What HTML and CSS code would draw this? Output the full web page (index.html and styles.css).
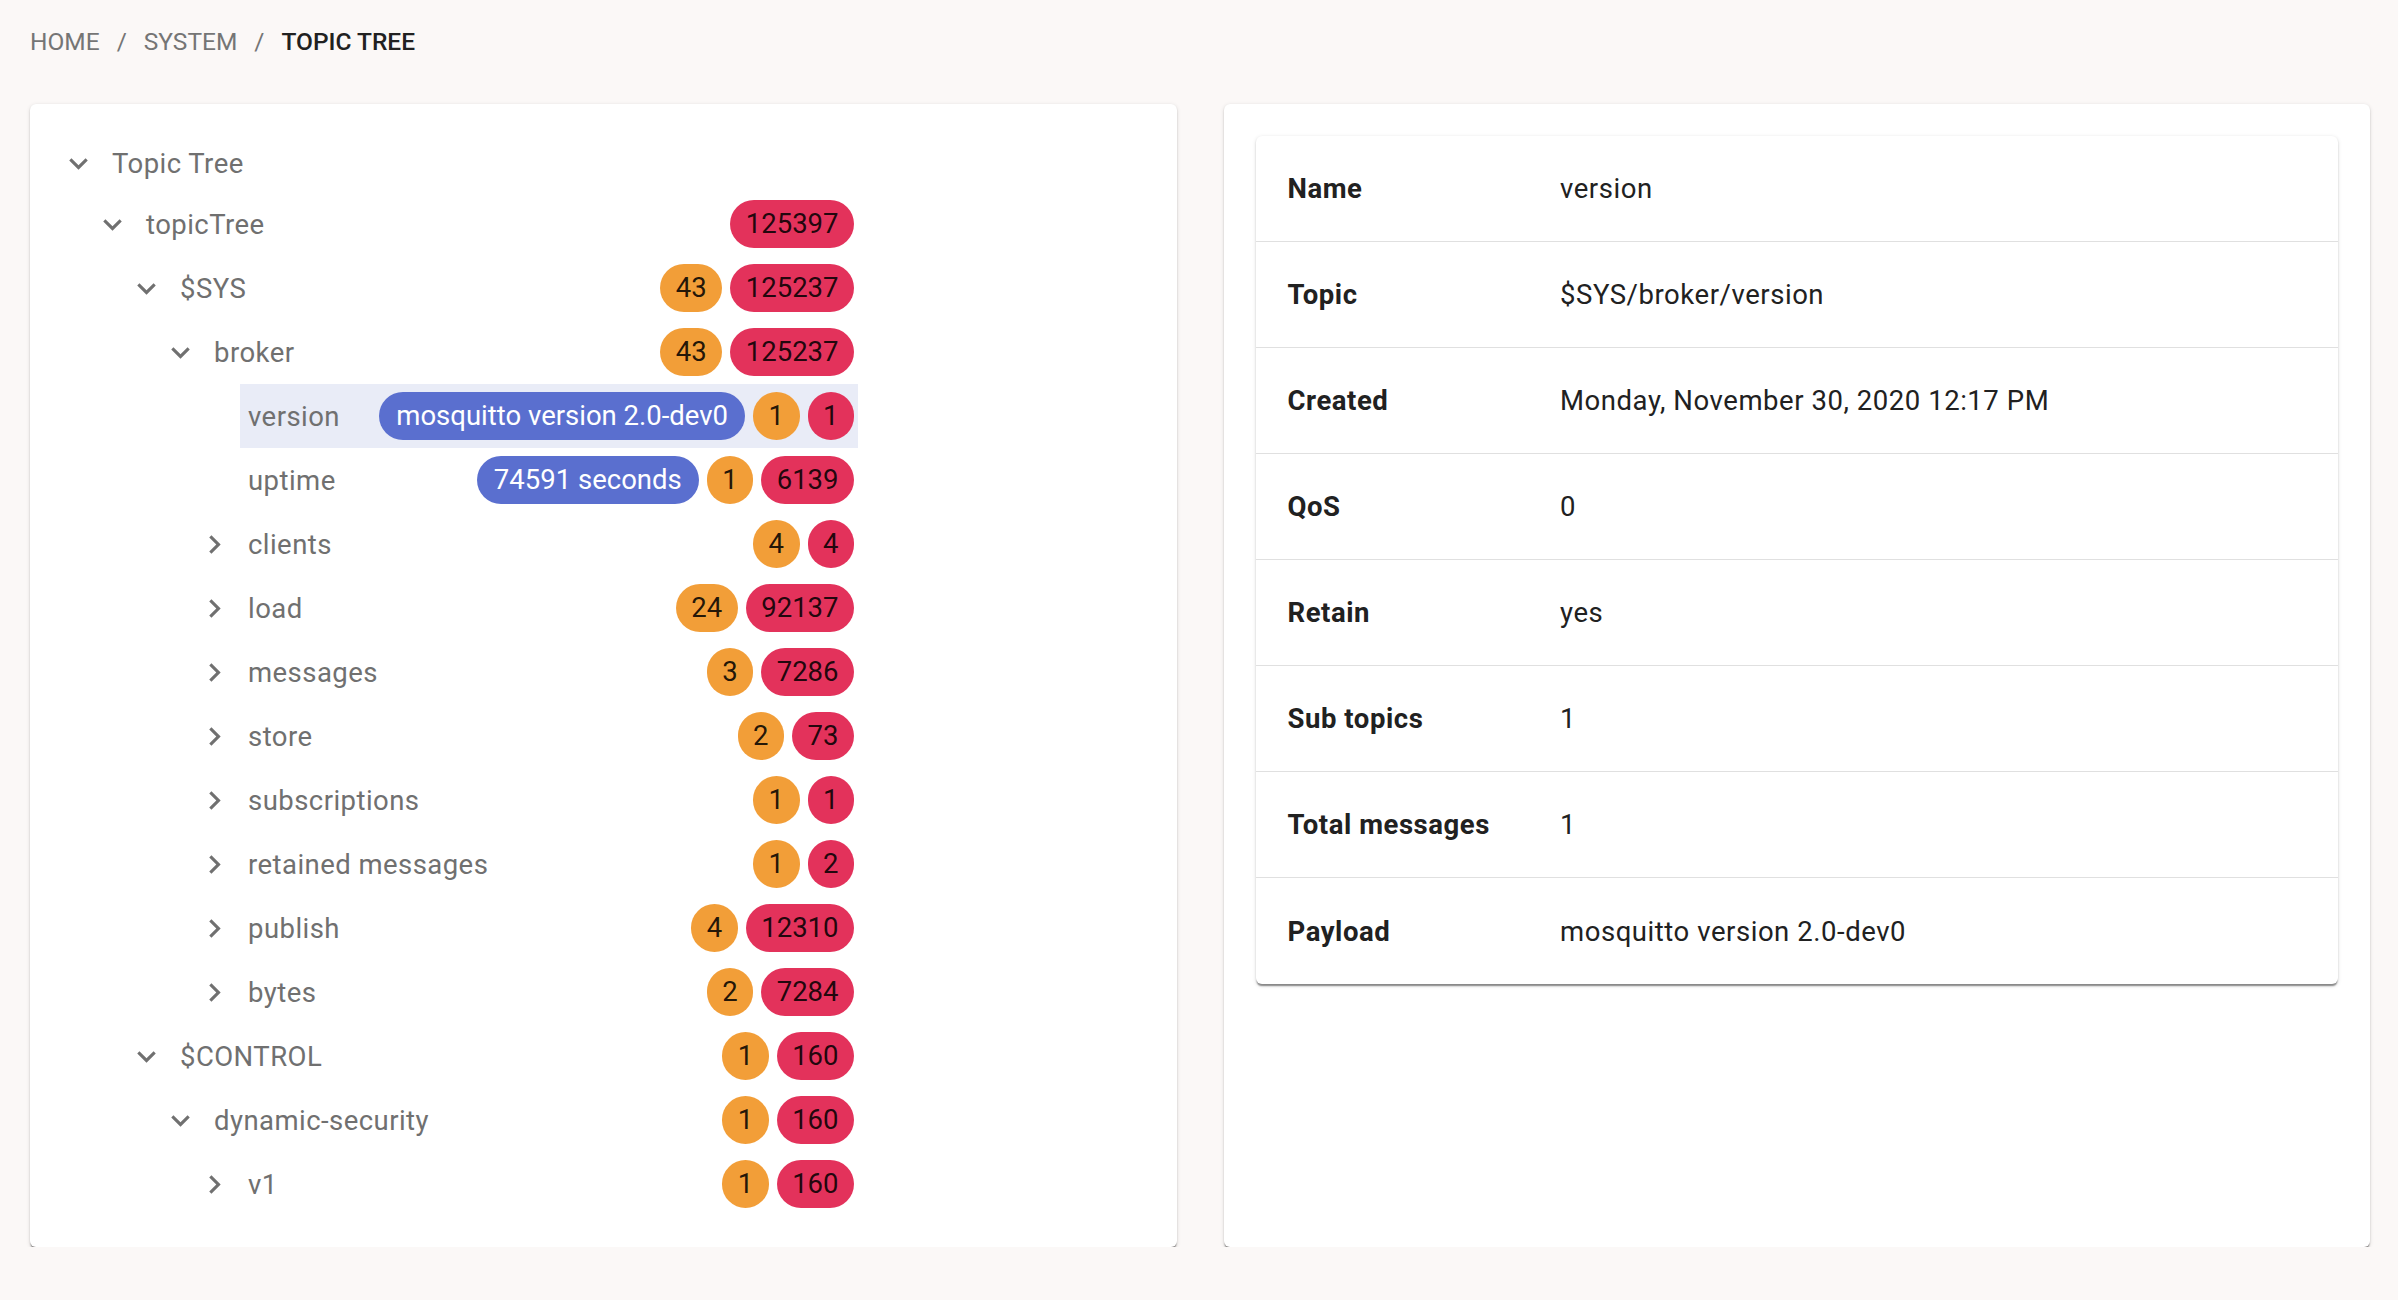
FILE: index.html
```html
<!DOCTYPE html>
<html lang="en">
<head>
<meta charset="utf-8">
<title>Topic Tree</title>
<link rel="stylesheet" href="styles.css">
</head>
<body>
<div class="page">
  <nav class="crumbs">
    <span class="crumb">Home</span><span class="sep">/</span><span class="crumb">System</span><span class="sep">/</span><span class="crumb current">Topic Tree</span>
  </nav>
  <div class="grid">
    <section class="card tree-card">
      <div class="tree">
        <div class="row l0 nochips">
          <span class="icon"><svg viewBox="0 0 24 24"><path d="M16.59 8.59L12 13.17 7.41 8.59 6 10l6 6 6-6z"/></svg></span>
          <div class="label"><span class="name">Topic Tree</span></div>
        </div>
        <div class="row l1">
          <span class="icon"><svg viewBox="0 0 24 24"><path d="M16.59 8.59L12 13.17 7.41 8.59 6 10l6 6 6-6z"/></svg></span>
          <div class="label"><span class="name">topicTree</span><span class="chips"><span class="chip red">125397</span></span></div>
        </div>
        <div class="row l2">
          <span class="icon"><svg viewBox="0 0 24 24"><path d="M16.59 8.59L12 13.17 7.41 8.59 6 10l6 6 6-6z"/></svg></span>
          <div class="label"><span class="name">$SYS</span><span class="chips"><span class="chip orange">43</span><span class="chip red">125237</span></span></div>
        </div>
        <div class="row l3">
          <span class="icon"><svg viewBox="0 0 24 24"><path d="M16.59 8.59L12 13.17 7.41 8.59 6 10l6 6 6-6z"/></svg></span>
          <div class="label"><span class="name">broker</span><span class="chips"><span class="chip orange">43</span><span class="chip red">125237</span></span></div>
        </div>
        <div class="row l4 selected">
          <span class="icon"></span>
          <div class="label"><span class="name">version</span><span class="chips"><span class="chip blue">mosquitto version 2.0-dev0</span><span class="chip orange">1</span><span class="chip red">1</span></span></div>
        </div>
        <div class="row l4">
          <span class="icon"></span>
          <div class="label"><span class="name">uptime</span><span class="chips"><span class="chip blue">74591 seconds</span><span class="chip orange">1</span><span class="chip red">6139</span></span></div>
        </div>
        <div class="row l4">
          <span class="icon"><svg viewBox="0 0 24 24"><path d="M10 6L8.59 7.41 13.17 12l-4.58 4.59L10 18l6-6z"/></svg></span>
          <div class="label"><span class="name">clients</span><span class="chips"><span class="chip orange">4</span><span class="chip red">4</span></span></div>
        </div>
        <div class="row l4">
          <span class="icon"><svg viewBox="0 0 24 24"><path d="M10 6L8.59 7.41 13.17 12l-4.58 4.59L10 18l6-6z"/></svg></span>
          <div class="label"><span class="name">load</span><span class="chips"><span class="chip orange">24</span><span class="chip red">92137</span></span></div>
        </div>
        <div class="row l4">
          <span class="icon"><svg viewBox="0 0 24 24"><path d="M10 6L8.59 7.41 13.17 12l-4.58 4.59L10 18l6-6z"/></svg></span>
          <div class="label"><span class="name">messages</span><span class="chips"><span class="chip orange">3</span><span class="chip red">7286</span></span></div>
        </div>
        <div class="row l4">
          <span class="icon"><svg viewBox="0 0 24 24"><path d="M10 6L8.59 7.41 13.17 12l-4.58 4.59L10 18l6-6z"/></svg></span>
          <div class="label"><span class="name">store</span><span class="chips"><span class="chip orange">2</span><span class="chip red">73</span></span></div>
        </div>
        <div class="row l4">
          <span class="icon"><svg viewBox="0 0 24 24"><path d="M10 6L8.59 7.41 13.17 12l-4.58 4.59L10 18l6-6z"/></svg></span>
          <div class="label"><span class="name">subscriptions</span><span class="chips"><span class="chip orange">1</span><span class="chip red">1</span></span></div>
        </div>
        <div class="row l4">
          <span class="icon"><svg viewBox="0 0 24 24"><path d="M10 6L8.59 7.41 13.17 12l-4.58 4.59L10 18l6-6z"/></svg></span>
          <div class="label"><span class="name">retained messages</span><span class="chips"><span class="chip orange">1</span><span class="chip red">2</span></span></div>
        </div>
        <div class="row l4">
          <span class="icon"><svg viewBox="0 0 24 24"><path d="M10 6L8.59 7.41 13.17 12l-4.58 4.59L10 18l6-6z"/></svg></span>
          <div class="label"><span class="name">publish</span><span class="chips"><span class="chip orange">4</span><span class="chip red">12310</span></span></div>
        </div>
        <div class="row l4">
          <span class="icon"><svg viewBox="0 0 24 24"><path d="M10 6L8.59 7.41 13.17 12l-4.58 4.59L10 18l6-6z"/></svg></span>
          <div class="label"><span class="name">bytes</span><span class="chips"><span class="chip orange">2</span><span class="chip red">7284</span></span></div>
        </div>
        <div class="row l2">
          <span class="icon"><svg viewBox="0 0 24 24"><path d="M16.59 8.59L12 13.17 7.41 8.59 6 10l6 6 6-6z"/></svg></span>
          <div class="label"><span class="name">$CONTROL</span><span class="chips"><span class="chip orange">1</span><span class="chip red">160</span></span></div>
        </div>
        <div class="row l3">
          <span class="icon"><svg viewBox="0 0 24 24"><path d="M16.59 8.59L12 13.17 7.41 8.59 6 10l6 6 6-6z"/></svg></span>
          <div class="label"><span class="name">dynamic-security</span><span class="chips"><span class="chip orange">1</span><span class="chip red">160</span></span></div>
        </div>
        <div class="row l4">
          <span class="icon"><svg viewBox="0 0 24 24"><path d="M10 6L8.59 7.41 13.17 12l-4.58 4.59L10 18l6-6z"/></svg></span>
          <div class="label"><span class="name">v1</span><span class="chips"><span class="chip orange">1</span><span class="chip red">160</span></span></div>
        </div>
      </div>
    </section>
    <section class="card detail-card">
      <div class="details">
        <div class="drow"><div class="key">Name</div><div class="val">version</div></div>
        <div class="drow"><div class="key">Topic</div><div class="val">$SYS/broker/version</div></div>
        <div class="drow"><div class="key">Created</div><div class="val">Monday, November 30, 2020 12:17 PM</div></div>
        <div class="drow"><div class="key">QoS</div><div class="val">0</div></div>
        <div class="drow"><div class="key">Retain</div><div class="val">yes</div></div>
        <div class="drow"><div class="key">Sub topics</div><div class="val">1</div></div>
        <div class="drow"><div class="key">Total messages</div><div class="val">1</div></div>
        <div class="drow"><div class="key">Payload</div><div class="val">mosquitto version 2.0-dev0</div></div>
      </div>
    </section>
  </div>
</div>
</body>
</html>
```

FILE: styles.css
```css
html, body {
  margin: 0;
  padding: 0;
  background: #fbf8f7;
}

body {
  font-family: Roboto, "Liberation Sans", Arial, sans-serif;
  color: #212121;
}

.page {
  padding: 24px 28px 0 30px;
}

.crumbs {
  display: flex;
  align-items: center;
  font-size: 24.5px;
  line-height: 36.75px;
  text-transform: uppercase;
  color: #757575;
  margin-bottom: 43.25px;
}

.sep {
  margin: 0 17px;
  text-transform: none;
}

.crumb.current {
  color: #212121;
  font-weight: 500;
}

.grid {
  display: grid;
  grid-template-columns: 1fr 1fr;
  gap: 47px;
  align-items: stretch;
}

.card {
  background: #fff;
  border-radius: 6px;
  box-shadow: 0 3px 1.5px -1.5px rgba(0,0,0,0.3), 0 1.5px 1.5px 0 rgba(0,0,0,0.16), 0 1.5px 4.5px 0 rgba(0,0,0,0.12);
}

.tree-card {
  padding: 31px 30px;
}

.detail-card {
  padding: 32px 32px;
}

/* tree */
.tree {
  width: 798px;
}

.row {
  display: flex;
  align-items: center;
}

.row.l1 { padding-left: 34px; }
.row.l2 { padding-left: 68px; }
.row.l3 { padding-left: 102px; }
.row.l4 { padding-left: 136px; }

.icon {
  flex: 0 0 37px;
  width: 37px;
  height: 37px;
  margin-right: 7px;
  display: flex;
  align-items: center;
  justify-content: center;
}

.icon svg {
  width: 37px;
  height: 37px;
  fill: #707070;
}

.label {
  flex: 1;
  display: flex;
  align-items: center;
  padding: 8px 4px 8px 8px;
  min-height: 41.25px;
  font-size: 27.5px;
  line-height: 41.25px;
  color: #707070;
}

.row.selected .label {
  background: #e9ecf7;
}

.name {
  white-space: nowrap;
  letter-spacing: 0.45px;
}

.chips {
  margin-left: auto;
  padding-left: 16px;
  display: flex;
  gap: 8px;
}

.chip {
  display: inline-flex;
  align-items: center;
  justify-content: center;
  height: 48px;
  padding: 0 15.5px;
  border-radius: 24px;
  font-size: 27.5px;
  line-height: 48px;
  white-space: nowrap;
  color: rgba(0,0,0,0.87);
}

.chip.orange { background: #f29e38; }
.chip.red { background: #e3325b; }
.chip.blue { background: #5a6fcf; color: #fff; padding: 0 17px; }

/* details */
.details {
  border-radius: 6px;
  overflow: hidden;
  background: #fff;
  box-shadow: 0 3px 1.5px -1.5px rgba(0,0,0,0.3), 0 1.5px 1.5px 0 rgba(0,0,0,0.16), 0 1.5px 4.5px 0 rgba(0,0,0,0.12);
}

.drow {
  display: grid;
  grid-template-columns: 304.5px 1fr;
  align-items: center;
  height: 106px;
  box-sizing: border-box;
  border-bottom: 1.5px solid #e0e0e0;
  font-size: 27.5px;
  line-height: 41px;
  letter-spacing: 0.55px;
  color: #212121;
}

.drow:last-child {
  border-bottom: none;
}

.key {
  padding-left: 32px;
  font-weight: 700;
}
```
